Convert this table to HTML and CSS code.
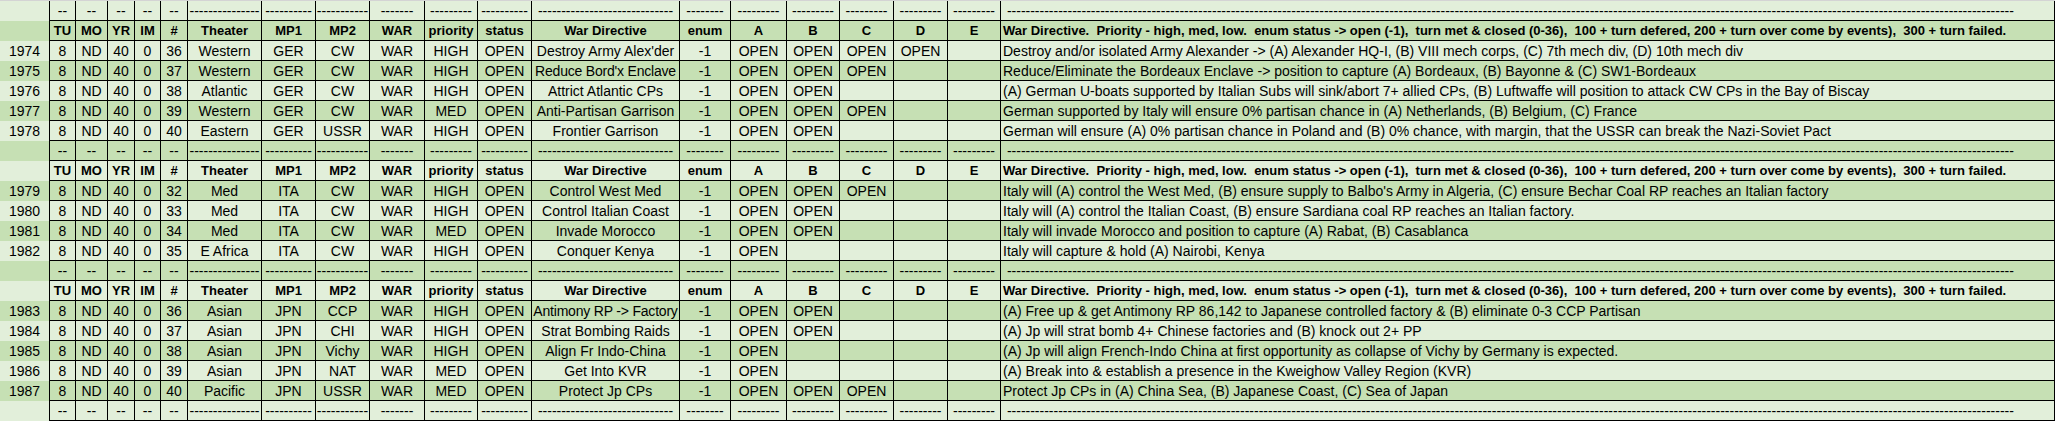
FILE: index.html
```html
<!DOCTYPE html>
<html lang="en">
<head>
<meta charset="utf-8">
<title>War Directives</title>
<link rel="stylesheet" href="styles.css">
</head>
<body>
<div class="sheet">
  <div class="row l dash"><div></div><div>--</div><div>--</div><div>--</div><div>--</div><div>--</div><div>---------------</div><div>----------</div><div>-----------</div><div>-------</div><div>---------</div><div>----------</div><div>-----------------------------</div><div>--------</div><div>---------</div><div>---------</div><div>---------</div><div>---------</div><div>---------</div><div> ------------------------------------------------------------------------------------------------------------------------------------------------------------------------------------------------------------------------</div></div>
  <div class="row k h"><div></div><div>TU</div><div>MO</div><div>YR</div><div>IM</div><div>#</div><div>Theater</div><div>MP1</div><div>MP2</div><div>WAR</div><div>priority</div><div>status</div><div>War Directive</div><div>enum</div><div>A</div><div>B</div><div>C</div><div>D</div><div>E</div><div>War Directive.  Priority - high, med, low.  enum status -&gt; open (-1),  turn met &amp; closed (0-36),  100 + turn defered, 200 + turn over come by events),  300 + turn failed.</div></div>
  <div class="row l"><div>1974</div><div>8</div><div>ND</div><div>40</div><div>0</div><div>36</div><div>Western</div><div>GER</div><div>CW</div><div>WAR</div><div>HIGH</div><div>OPEN</div><div>Destroy Army Alex'der</div><div>-1</div><div>OPEN</div><div>OPEN</div><div>OPEN</div><div>OPEN</div><div></div><div>Destroy and/or isolated Army Alexander -&gt; (A) Alexander HQ-I, (B) VIII mech corps, (C) 7th mech div, (D) 10th mech div</div></div>
  <div class="row k"><div>1975</div><div>8</div><div>ND</div><div>40</div><div>0</div><div>37</div><div>Western</div><div>GER</div><div>CW</div><div>WAR</div><div>HIGH</div><div>OPEN</div><div class="fit">Reduce Bord'x Enclave</div><div>-1</div><div>OPEN</div><div>OPEN</div><div>OPEN</div><div></div><div></div><div>Reduce/Eliminate the Bordeaux Enclave -&gt; position to capture (A) Bordeaux, (B) Bayonne &amp; (C) SW1-Bordeaux</div></div>
  <div class="row l"><div>1976</div><div>8</div><div>ND</div><div>40</div><div>0</div><div>38</div><div>Atlantic</div><div>GER</div><div>CW</div><div>WAR</div><div>HIGH</div><div>OPEN</div><div>Attrict Atlantic CPs</div><div>-1</div><div>OPEN</div><div>OPEN</div><div></div><div></div><div></div><div>(A) German U-boats supported by Italian Subs will sink/abort 7+ allied CPs, (B) Luftwaffe will position to attack CW CPs in the Bay of Biscay</div></div>
  <div class="row k"><div>1977</div><div>8</div><div>ND</div><div>40</div><div>0</div><div>39</div><div>Western</div><div>GER</div><div>CW</div><div>WAR</div><div>MED</div><div>OPEN</div><div>Anti-Partisan Garrison</div><div>-1</div><div>OPEN</div><div>OPEN</div><div>OPEN</div><div></div><div></div><div>German supported by Italy will ensure 0% partisan chance in (A) Netherlands, (B) Belgium, (C) France</div></div>
  <div class="row l"><div>1978</div><div>8</div><div>ND</div><div>40</div><div>0</div><div>40</div><div>Eastern</div><div>GER</div><div>USSR</div><div>WAR</div><div>HIGH</div><div>OPEN</div><div>Frontier Garrison</div><div>-1</div><div>OPEN</div><div>OPEN</div><div></div><div></div><div></div><div>German will ensure (A) 0% partisan chance in Poland and (B) 0% chance, with margin, that the USSR can break the Nazi-Soviet Pact</div></div>
  <div class="row k dash"><div></div><div>--</div><div>--</div><div>--</div><div>--</div><div>--</div><div>---------------</div><div>----------</div><div>-----------</div><div>-------</div><div>---------</div><div>----------</div><div>-----------------------------</div><div>--------</div><div>---------</div><div>---------</div><div>---------</div><div>---------</div><div>---------</div><div> ------------------------------------------------------------------------------------------------------------------------------------------------------------------------------------------------------------------------</div></div>
  <div class="row l h"><div></div><div>TU</div><div>MO</div><div>YR</div><div>IM</div><div>#</div><div>Theater</div><div>MP1</div><div>MP2</div><div>WAR</div><div>priority</div><div>status</div><div>War Directive</div><div>enum</div><div>A</div><div>B</div><div>C</div><div>D</div><div>E</div><div>War Directive.  Priority - high, med, low.  enum status -&gt; open (-1),  turn met &amp; closed (0-36),  100 + turn defered, 200 + turn over come by events),  300 + turn failed.</div></div>
  <div class="row k"><div>1979</div><div>8</div><div>ND</div><div>40</div><div>0</div><div>32</div><div>Med</div><div>ITA</div><div>CW</div><div>WAR</div><div>HIGH</div><div>OPEN</div><div>Control West Med</div><div>-1</div><div>OPEN</div><div>OPEN</div><div>OPEN</div><div></div><div></div><div>Italy will (A) control the West Med, (B) ensure supply to Balbo's Army in Algeria, (C) ensure Bechar Coal RP reaches an Italian factory</div></div>
  <div class="row l"><div>1980</div><div>8</div><div>ND</div><div>40</div><div>0</div><div>33</div><div>Med</div><div>ITA</div><div>CW</div><div>WAR</div><div>HIGH</div><div>OPEN</div><div>Control Italian Coast</div><div>-1</div><div>OPEN</div><div>OPEN</div><div></div><div></div><div></div><div>Italy will (A) control the Italian Coast, (B) ensure Sardiana coal RP reaches an Italian factory.</div></div>
  <div class="row k"><div>1981</div><div>8</div><div>ND</div><div>40</div><div>0</div><div>34</div><div>Med</div><div>ITA</div><div>CW</div><div>WAR</div><div>MED</div><div>OPEN</div><div>Invade Morocco</div><div>-1</div><div>OPEN</div><div>OPEN</div><div></div><div></div><div></div><div>Italy will invade Morocco and position to capture (A) Rabat, (B) Casablanca</div></div>
  <div class="row l"><div>1982</div><div>8</div><div>ND</div><div>40</div><div>0</div><div>35</div><div>E Africa</div><div>ITA</div><div>CW</div><div>WAR</div><div>HIGH</div><div>OPEN</div><div>Conquer Kenya</div><div>-1</div><div>OPEN</div><div></div><div></div><div></div><div></div><div>Italy will capture &amp; hold (A) Nairobi, Kenya</div></div>
  <div class="row k dash"><div></div><div>--</div><div>--</div><div>--</div><div>--</div><div>--</div><div>---------------</div><div>----------</div><div>-----------</div><div>-------</div><div>---------</div><div>----------</div><div>-----------------------------</div><div>--------</div><div>---------</div><div>---------</div><div>---------</div><div>---------</div><div>---------</div><div> ------------------------------------------------------------------------------------------------------------------------------------------------------------------------------------------------------------------------</div></div>
  <div class="row l h"><div></div><div>TU</div><div>MO</div><div>YR</div><div>IM</div><div>#</div><div>Theater</div><div>MP1</div><div>MP2</div><div>WAR</div><div>priority</div><div>status</div><div>War Directive</div><div>enum</div><div>A</div><div>B</div><div>C</div><div>D</div><div>E</div><div>War Directive.  Priority - high, med, low.  enum status -&gt; open (-1),  turn met &amp; closed (0-36),  100 + turn defered, 200 + turn over come by events),  300 + turn failed.</div></div>
  <div class="row k"><div>1983</div><div>8</div><div>ND</div><div>40</div><div>0</div><div>36</div><div>Asian</div><div>JPN</div><div>CCP</div><div>WAR</div><div>HIGH</div><div>OPEN</div><div class="fit">Antimony RP -&gt; Factory</div><div>-1</div><div>OPEN</div><div>OPEN</div><div></div><div></div><div></div><div>(A) Free up &amp; get Antimony RP 86,142 to Japanese controlled factory &amp; (B) eliminate 0-3 CCP Partisan</div></div>
  <div class="row l"><div>1984</div><div>8</div><div>ND</div><div>40</div><div>0</div><div>37</div><div>Asian</div><div>JPN</div><div>CHI</div><div>WAR</div><div>HIGH</div><div>OPEN</div><div>Strat Bombing Raids</div><div>-1</div><div>OPEN</div><div>OPEN</div><div></div><div></div><div></div><div>(A) Jp will strat bomb 4+ Chinese factories and (B) knock out 2+ PP</div></div>
  <div class="row k"><div>1985</div><div>8</div><div>ND</div><div>40</div><div>0</div><div>38</div><div>Asian</div><div>JPN</div><div>Vichy</div><div>WAR</div><div>HIGH</div><div>OPEN</div><div>Align Fr Indo-China</div><div>-1</div><div>OPEN</div><div></div><div></div><div></div><div></div><div>(A) Jp will align French-Indo China at first opportunity as collapse of Vichy by Germany is expected.</div></div>
  <div class="row l"><div>1986</div><div>8</div><div>ND</div><div>40</div><div>0</div><div>39</div><div>Asian</div><div>JPN</div><div>NAT</div><div>WAR</div><div>MED</div><div>OPEN</div><div>Get Into KVR</div><div>-1</div><div>OPEN</div><div></div><div></div><div></div><div></div><div>(A) Break into &amp; establish a presence in the Kweighow Valley Region (KVR)</div></div>
  <div class="row k"><div>1987</div><div>8</div><div>ND</div><div>40</div><div>0</div><div>40</div><div>Pacific</div><div>JPN</div><div>USSR</div><div>WAR</div><div>MED</div><div>OPEN</div><div>Protect Jp CPs</div><div>-1</div><div>OPEN</div><div>OPEN</div><div>OPEN</div><div></div><div></div><div>Protect Jp CPs in (A) China Sea, (B) Japanese Coast, (C) Sea of Japan</div></div>
  <div class="row l dash"><div></div><div>--</div><div>--</div><div>--</div><div>--</div><div>--</div><div>---------------</div><div>----------</div><div>-----------</div><div>-------</div><div>---------</div><div>----------</div><div>-----------------------------</div><div>--------</div><div>---------</div><div>---------</div><div>---------</div><div>---------</div><div>---------</div><div> ------------------------------------------------------------------------------------------------------------------------------------------------------------------------------------------------------------------------</div></div>
</div>
</body>
</html>
```

FILE: styles.css
```css
html, body {
  margin: 0;
  padding: 0;
  background: #ffffff;
}

.sheet {
  width: 2055px;
  border-top: 1px solid #d4d4d4;
  font-family: "Liberation Sans", Arial, sans-serif;
  font-size: 14px;
  color: #000000;
}

.row {
  display: grid;
  grid-template-columns: 49px 26px 32px 27px 26px 27px 74px 54px 54px 55px 53px 54px 148px 51px 56px 53px 54px 54px 53px 1055px;
}

.row.l { background: #e2efda; }
.row.k { background: #c6e0b4; }
.row.h { font-weight: 700; font-size: 13px; }

.row > div {
  box-sizing: border-box;
  height: 20px;
  border-left: 1px solid #000000;
  border-bottom: 1px solid #000000;
  line-height: 20px;
  text-align: center;
  white-space: pre;
  overflow: hidden;
}

.row > div:first-child {
  border-left: 0;
  border-bottom: 0;
}

.row > div:last-child {
  border-right: 1px solid #000000;
  text-align: left;
  padding-left: 2px;
}

.row > div.fit {
  letter-spacing: -0.2px;
}
```
